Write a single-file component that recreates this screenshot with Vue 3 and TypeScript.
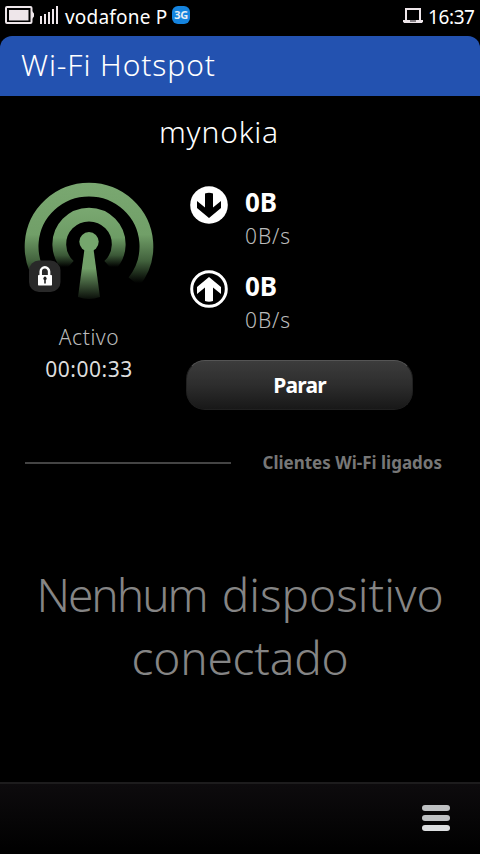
<script setup lang="ts">
interface Traffic {
  direction: 'down' | 'up'
  total: string
  rate: string
}

const traffic: Traffic[] = [
  { direction: 'down', total: '0B', rate: '0B/s' },
  { direction: 'up', total: '0B', rate: '0B/s' },
]
</script>

<template>
  <main class="screen">
    <header class="status">
      <svg class="battery" width="29" height="18" viewBox="0 0 29 18">
        <rect x="1" y="1" width="25.5" height="16" rx="1" fill="none" stroke="#eee6ea" stroke-width="2" />
        <path d="M27 5l2 2.500v3l-2 2.500z M4 4h19.500v10.500H4z" fill="#eee6ea" />
      </svg>
      <svg class="signal" width="18" height="18" viewBox="0 0 18 18">
        <path d="M0 10h2v8H0zM4 8h2v10H4zM8 6h2v12H8zM12 3h2v15h-2zM16 0h2v18h-2z" fill="#eee6ea" />
      </svg>
      <span class="carrier">vodafone P</span>
      <span class="network">3G</span>
      <svg class="laptop" width="20" height="16" viewBox="0 0 20 16">
        <path d="M3 12.500V1h14v11.500" fill="none" stroke="#eee6ea" stroke-width="2" />
        <path d="M0 12h20v1.500l-1 1.500H1l-1-1.500z" fill="#eee6ea" />
        <path d="M7 12h6v2H7z" fill="#858085" />
      </svg>
      <span class="clock">16:37</span>
    </header>

    <h1 class="title"><span>Wi-Fi Hotspot</span></h1>
    <h2 class="ssid"><span>mynokia</span></h2>

    <section class="panel">
      <div class="state">
        <svg class="hotspot" width="134" height="122" viewBox="0 0 134 122">
          <defs>
            <linearGradient id="outer" gradientUnits="userSpaceOnUse" x1="0" y1="2" x2="0" y2="103">
              <stop offset="0" stop-color="#7aa871" /><stop offset=".52" stop-color="#719f68" />
              <stop offset=".78" stop-color="#42623d" /><stop offset="1" stop-color="#000" />
            </linearGradient>
            <linearGradient id="inner" gradientUnits="userSpaceOnUse" x1="0" y1="28" x2="0" y2="87">
              <stop offset="0" stop-color="#7aa871" /><stop offset=".5" stop-color="#6d9c65" />
              <stop offset=".8" stop-color="#3b5837" /><stop offset="1" stop-color="#000" />
            </linearGradient>
            <linearGradient id="mast" gradientUnits="userSpaceOnUse" x1="0" y1="55" x2="0" y2="122">
              <stop offset="0" stop-color="#75a66d" /><stop offset=".5" stop-color="#719f68" />
              <stop offset="1" stop-color="#000" />
            </linearGradient>
          </defs>
          <path d="M22 101.700A57.400 56.800 0 1 1 112 101.700" fill="none" stroke="url(#outer)" stroke-width="13.8" />
          <path d="M47 86.200A29.700 29.700 0 1 1 87 86.200" fill="none" stroke="url(#inner)" stroke-width="13.8" />
          <path d="M62.500 69L56 117q11 4 22 0L71.500 69z" fill="url(#mast)" />
          <circle cx="67" cy="61.800" r="9.700" fill="#75a66d" />
          <rect x="7" y="80.500" width="31.500" height="31.500" rx="10" fill="#292929" />
          <path d="M18.700 96V91.500a4.200 4.200 0 0 1 8.400 0V96" fill="none" stroke="#fff" stroke-width="2.500" />
          <rect x="16" y="95" width="14" height="10.500" rx=".7" fill="#fff" />
          <path d="M22.200 100v3.500h1.600V100a1.700 1.700 0 1 0-1.600 0z" fill="#222" />
        </svg>
        <span class="active">Activo</span>
        <span class="timer">00:00:33</span>
      </div>

      <div class="controls">
        <div v-for="item in traffic" :key="item.direction" class="traffic">
          <svg class="arrow" width="38" height="38" viewBox="0 0 38 38">
            <template v-if="item.direction === 'down'">
              <circle cx="19" cy="19" r="18.800" fill="#fff" />
              <path d="M15 7.500q4-1.500 8 0V21.500l8-6.500v7L19 32 7 22v-7l8 6.500z" fill="#000" />
            </template>
            <template v-else>
              <circle cx="19" cy="19" r="17.300" fill="none" stroke="#fff" stroke-width="3" />
              <path d="M15 31q4 1.500 8 0V17.500l8 6.500v-7L19 7 7 17v7l8-6.500z" fill="#fff" />
            </template>
          </svg>
          <div class="figures">
            <strong>{{ item.total }}</strong>
            <span>{{ item.rate }}</span>
          </div>
        </div>
        <button class="stop" type="button">Parar</button>
      </div>
    </section>

    <div class="divider">
      <hr />
      <h3>Clientes Wi-Fi ligados</h3>
    </div>

    <p class="empty">
      <span><span class="tight">Nenhum</span> <span class="loose">dispositivo</span></span>
      <span class="second">conectado</span>
    </p>

    <footer class="toolbar">
      <button class="menu" type="button" aria-label="Menu"><i></i><i></i><i></i></button>
    </footer>
  </main>
</template>

<style>
body { margin: 0; background: #000; }
</style>

<style scoped>
.screen { width: 480px; height: 854px; overflow: hidden; display: flex; flex-direction: column; background: #000; color: #fff; font-family: "Noto Sans", sans-serif; }
h1, h2, h3, p, hr, button { margin: 0; padding: 0; border: 0; font: inherit; color: inherit; }
svg { display: block; flex: none; }
.status { height: 36px; display: flex; align-items: flex-start; box-sizing: border-box; padding-left: 5px; padding-right: 4px; white-space: nowrap; }
.battery { margin-top: 6px; }
.signal { margin: 6px 7px 0 6px; }
.carrier { font-size: 19px; line-height: 34px; width: 107px; letter-spacing: .2px; }
.network { width: 18px; height: 18px; margin-top: 6px; border-radius: 6px; background: #1584df; color: #e7edf5; font-size: 11px; font-weight: 700; line-height: 18px; text-align: center; letter-spacing: -.4px; }
.laptop { margin: 8px 5px 0 auto; }
.clock { font-size: 19px; line-height: 35px; width: 48px; letter-spacing: -.4px; }
.title { height: 60px; box-sizing: border-box; padding-left: 21px; border-radius: 12px 12px 0 0; background: #2352b0; font-size: 30px; font-weight: 300; line-height: 58px; letter-spacing: .9px; }
.ssid { height: 76px; padding-left: 159px; font-size: 30px; font-weight: 300; line-height: 72px; letter-spacing: .8px; }
.panel { display: flex; height: 250px; }
.state { width: 178px; padding-top: 8px; display: flex; flex-direction: column; align-items: center; }
.active { margin-top: 19px; font-size: 21px; line-height: 32px; font-weight: 300; color: #bbb; letter-spacing: .6px; }
.timer { font-size: 21px; line-height: 32px; color: #ddd; letter-spacing: .5px; }
.controls { width: 235px; padding-left: 8px; box-sizing: border-box; }
.traffic { height: 84px; display: flex; padding: 14px 0 0 4px; box-sizing: border-box; }
.figures { margin-left: 17px; display: flex; flex-direction: column; }
.figures strong { font-size: 26px; line-height: 32px; font-weight: 700; }
.figures span { font-size: 21px; line-height: 36px; font-weight: 300; color: #bbb; letter-spacing: .9px; }
.stop { display: block; width: 227px; height: 50px; margin-top: 20px; border-radius: 19px; border: 1px solid #202020; border-top-color: #555; background: linear-gradient(#3c3c3c, #2d2d2d 50%, #181818); font-size: 21px; font-weight: 700; line-height: 46px; text-align: center; letter-spacing: -.8px; }
.divider { display: flex; align-items: center; height: 40px; padding: 21px 38px 0 25px; }
.divider hr { width: 206px; height: 2px; background: #444; }
.divider h3 { margin-left: auto; color: #777; font-size: 17px; font-weight: 700; line-height: 40px; white-space: nowrap; }
.empty { display: flex; flex-direction: column; align-items: center; margin-top: 80px; color: #858585; font-size: 46px; line-height: 63px; font-weight: 300; white-space: nowrap; }
.tight { letter-spacing: -2px; margin-right: 3px; }
.loose { letter-spacing: 0; }
.second { letter-spacing: -.2px; }
.toolbar { margin-top: auto; height: 72px; box-sizing: border-box; border-top: 2px solid #1d1c1d; padding: 21px 30px 0; display: flex; justify-content: flex-end; background: linear-gradient(#0d0b0d, #000); }
.menu { display: flex; flex-direction: column; gap: 4px; width: 28px; background: none; }
.menu i { width: 28px; height: 6px; border-radius: 3px; background: #bec0c2; }
.menu i:last-child { background: #dcdee0; }
</style>
